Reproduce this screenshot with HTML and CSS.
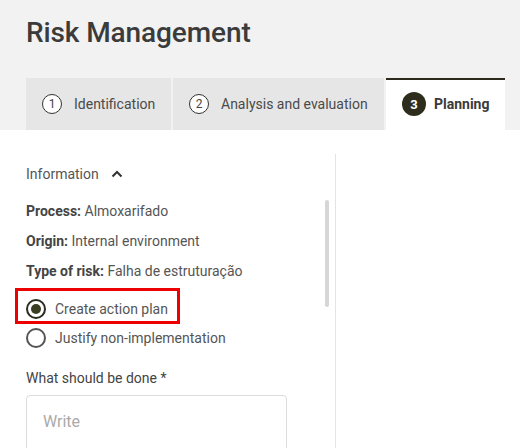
FILE: index.html
```html
<!DOCTYPE html>
<html>
<head>
<meta charset="utf-8">
<link rel="stylesheet" href="styles.css">
</head>
<body>
<header class="header">
  <h1 class="title">Risk Management</h1>
  <nav class="tabs">
    <div class="tab tab-1"><span class="step">1</span><span class="tab-label">Identification</span></div>
    <div class="tab tab-2"><span class="step">2</span><span class="tab-label">Analysis and evaluation</span></div>
    <div class="tab tab-active"><span class="step step-active">3</span><span class="tab-label">Planning</span></div>
  </nav>
</header>
<main class="main">
  <section class="panel">
    <div class="section-head">
      <span>Information</span>
      <svg class="chevron" width="12" height="8" viewBox="0 0 12 8"><path d="M1.5 6.5 L6 2 L10.5 6.5" fill="none" stroke="#333" stroke-width="2"/></svg>
    </div>
    <div class="info">
      <div class="info-row"><b>Process:</b> Almoxarifado</div>
      <div class="info-row"><b>Origin:</b> Internal environment</div>
      <div class="info-row"><b>Type of risk:</b> Falha de estruturação</div>
    </div>
    <div class="radios">
      <label class="radio-row radio-selected"><span class="radio on"></span><span>Create action plan</span><span class="highlight"></span></label>
      <label class="radio-row"><span class="radio"></span><span>Justify non-implementation</span></label>
    </div>
    <div class="field-label">What should be done *</div>
    <div class="textarea">Write</div>
    <div class="scroll-thumb"></div>
  </section>
  <section class="side"></section>
</main>
</body>
</html>
```

FILE: styles.css
```css
* { box-sizing: border-box; }
html, body { margin: 0; padding: 0; }
body {
  font-family: Roboto, "Liberation Sans", sans-serif;
  background: #ffffff;
  color: #444;
  width: 520px;
  height: 448px;
  overflow: hidden;
}
.header {
  background: #f2f2f2;
  padding: 16px 15px 0 26px;
}
.title {
  margin: 0;
  font-size: 28px;
  line-height: 34px;
  font-weight: 500;
  color: #3b3b3b;
  letter-spacing: -0.1px;
}
.tabs {
  display: flex;
  gap: 2px;
  margin-top: 28px;
  height: 52px;
}
.tab {
  display: flex;
  align-items: center;
  padding: 0 16px;
  background: #e6e6e6;
  font-size: 14px;
  color: #4a4a4a;
}
.tab-1 { width: 145px; }
.tab-2 { width: 211px; }
.tab-active {
  background: #ffffff;
  border-top: 2px solid #2b2a1c;
  width: 119px;
  padding-bottom: 2px;
}
.tab-active .tab-label { font-weight: 700; color: #3a3a3a; }
.step {
  width: 20px;
  height: 20px;
  border: 1px solid #333;
  border-radius: 50%;
  background: #fff;
  display: flex;
  align-items: center;
  justify-content: center;
  font-size: 12px;
  color: #444;
  margin-right: 12px;
  flex: none;
}
.step-active {
  width: 24px;
  height: 24px;
  border: none;
  background: #2e2d1d;
  color: #fff;
  font-weight: 700;
  font-size: 13px;
  margin-right: 8px;
}
.main {
  display: flex;
}
.panel {
  position: relative;
  width: 336px;
  margin-top: 24px;
  padding: 10px 0 0 26px;
  border-right: 1px solid #e4e4e4;
  height: 294px;
}
.side { flex: 1; }
.section-head {
  display: flex;
  align-items: center;
  gap: 12px;
  font-size: 14px;
  line-height: 20px;
  color: #555;
}
.info { margin-top: 12px; }
.info-row {
  font-size: 14px;
  line-height: 30px;
  color: #555;
}
.info-row b { color: #444; font-weight: 700; }
.radios { margin-top: 8px; }
.radio-row {
  position: relative;
  display: flex;
  align-items: center;
  height: 29px;
  font-size: 14px;
  color: #555;
  gap: 9px;
}
.radio {
  width: 20px;
  height: 20px;
  border: 2px solid #555;
  border-radius: 50%;
  display: flex;
  align-items: center;
  justify-content: center;
  flex: none;
}
.radio.on { border-color: #2a2a1e; }
.radio.on::after {
  content: "";
  width: 10px;
  height: 10px;
  border-radius: 50%;
  background: #3b3e22;
}
.highlight {
  position: absolute;
  left: -11px;
  top: -6px;
  width: 165px;
  height: 36px;
  border: 3px solid #ee0000;
}
.field-label {
  margin-top: 16px;
  font-size: 14px;
  line-height: 20px;
  color: #444;
}
.textarea {
  margin-top: 7px;
  width: 261px;
  height: 70px;
  border: 1px solid #dcdcdc;
  border-radius: 4px;
  padding: 16px 16px;
  font-size: 16px;
  line-height: 20px;
  color: #aaa;
}
.scroll-thumb {
  position: absolute;
  left: 325px;
  top: 46px;
  width: 4px;
  height: 107px;
  border-radius: 2px;
  background: #d6d6d6;
}
```
